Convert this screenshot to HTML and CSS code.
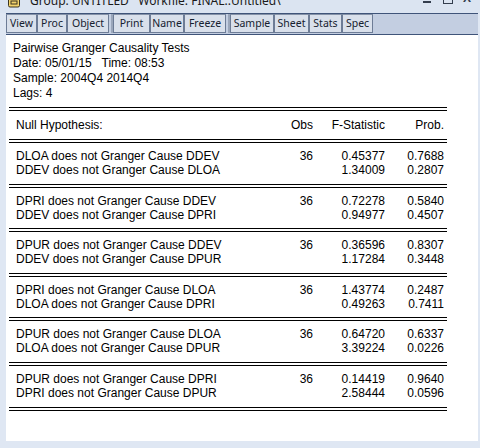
FILE: index.html
```html
<!DOCTYPE html>
<html>
<head>
<meta charset="utf-8">
<link rel="stylesheet" href="styles.css">
</head>
<body>
<div class="titlebar">
  <svg class="ticon" width="12" height="8" viewBox="0 0 12 8"><rect x="0.5" y="-4" width="11" height="11" rx="1.5" fill="#f3d36b" stroke="#3a3320"/><rect x="3" y="1" width="6" height="3" fill="#f3d36b" stroke="#3a3320" stroke-width="1"/></svg>
  <span class="ttext">Group: UNTITLED&nbsp;&nbsp;&nbsp;Workfile: FINAL::Untitled\</span>
  <div class="wctl">
    <span class="wmin"></span>
    <span class="wmax"></span>
    <span class="wx">X</span>
  </div>
</div>
<div class="frame">
  <div class="toolbar">
    <span class="btn w31">View</span><span class="btn w30">Proc</span><span class="btn w42">Object</span><span class="sep"></span><span class="btn w37">Print</span><span class="btn w34">Name</span><span class="btn w42">Freeze</span><span class="sep"></span><span class="btn w44">Sample</span><span class="btn w35">Sheet</span><span class="btn w33">Stats</span><span class="btn w31">Spec</span>
  </div>
  <div class="content">
    <div class="info">
      <div>Pairwise Granger Causality Tests</div>
      <div>Date: 05/01/15&nbsp;&nbsp; Time: 08:53</div>
      <div>Sample: 2004Q4 2014Q4</div>
      <div>Lags: 4</div>
    </div>
    <div class="tbl">
      <div class="dbl"></div>
      <div class="row head"><span class="c1">Null Hypothesis:</span><span class="c2">Obs</span><span class="c3">F-Statistic</span><span class="c4">Prob.</span></div>
      <div class="dbl"></div>
      <div class="blk">
        <div class="row"><span class="c1">DLOA does not Granger Cause DDEV</span><span class="c2">36</span><span class="c3">0.45377</span><span class="c4">0.7688</span></div>
        <div class="row"><span class="c1">DDEV does not Granger Cause DLOA</span><span class="c2"></span><span class="c3">1.34009</span><span class="c4">0.2807</span></div>
      </div>
      <div class="dbl"></div>
      <div class="blk">
        <div class="row"><span class="c1">DPRI does not Granger Cause DDEV</span><span class="c2">36</span><span class="c3">0.72278</span><span class="c4">0.5840</span></div>
        <div class="row"><span class="c1">DDEV does not Granger Cause DPRI</span><span class="c2"></span><span class="c3">0.94977</span><span class="c4">0.4507</span></div>
      </div>
      <div class="dbl"></div>
      <div class="blk">
        <div class="row"><span class="c1">DPUR does not Granger Cause DDEV</span><span class="c2">36</span><span class="c3">0.36596</span><span class="c4">0.8307</span></div>
        <div class="row"><span class="c1">DDEV does not Granger Cause DPUR</span><span class="c2"></span><span class="c3">1.17284</span><span class="c4">0.3448</span></div>
      </div>
      <div class="dbl"></div>
      <div class="blk">
        <div class="row"><span class="c1">DPRI does not Granger Cause DLOA</span><span class="c2">36</span><span class="c3">1.43774</span><span class="c4">0.2487</span></div>
        <div class="row"><span class="c1">DLOA does not Granger Cause DPRI</span><span class="c2"></span><span class="c3">0.49263</span><span class="c4">0.7411</span></div>
      </div>
      <div class="dbl"></div>
      <div class="blk">
        <div class="row"><span class="c1">DPUR does not Granger Cause DLOA</span><span class="c2">36</span><span class="c3">0.64720</span><span class="c4">0.6337</span></div>
        <div class="row"><span class="c1">DLOA does not Granger Cause DPUR</span><span class="c2"></span><span class="c3">3.39224</span><span class="c4">0.0226</span></div>
      </div>
      <div class="dbl"></div>
      <div class="blk">
        <div class="row"><span class="c1">DPUR does not Granger Cause DPRI</span><span class="c2">36</span><span class="c3">0.14419</span><span class="c4">0.9640</span></div>
        <div class="row"><span class="c1">DPRI does not Granger Cause DPUR</span><span class="c2"></span><span class="c3">2.58444</span><span class="c4">0.0596</span></div>
      </div>
      <div class="dbl"></div>
    </div>
  </div>
</div>
</body>
</html>
```

FILE: styles.css
```css
html, body {
  margin: 0;
  padding: 0;
}
body {
  width: 480px;
  height: 448px;
  overflow: hidden;
  background: #dfe7f3;
  font-family: "Liberation Sans", Arial, sans-serif;
}
.titlebar {
  height: 13px;
  overflow: hidden;
  display: flex;
  align-items: flex-start;
  background: #dbe4f1;
  position: relative;
}
.ticon {
  margin-left: 8px;
  margin-top: 0;
  flex: none;
}
.ttext {
  margin-left: 10px;
  margin-top: -5px;
  font-family: "Noto Sans", sans-serif;
  font-size: 12px;
  line-height: 12px;
  color: #1a1a1a;
  white-space: pre;
}
.wctl {
  position: absolute;
  top: 0;
  left: 423px;
  height: 8px;
  width: 55px;
}
.wmin {
  position: absolute;
  left: 0;
  top: 1px;
  width: 8px;
  height: 2px;
  background: #333d4d;
}
.wmax {
  position: absolute;
  left: 20px;
  top: -8px;
  width: 8px;
  height: 9px;
  border: 1px solid #333d4d;
  border-top-width: 2px;
}
.wx {
  position: absolute;
  left: 40px;
  top: -8px;
  font-family: "Liberation Sans", sans-serif;
  font-weight: bold;
  font-size: 12px;
  line-height: 12px;
  color: #333d4d;
}
.frame {
  margin: 0 2px 7px 6px;
  height: 428px;
  display: flex;
  flex-direction: column;
  background: #fff;
}
.toolbar {
  height: 20px;
  border-top: 1px solid #3f5479;
  border-bottom: 1px solid #3f5479;
  background: #c3cee1;
  display: flex;
  align-items: flex-start;
  flex: none;
}
.btn {
  box-sizing: border-box;
  height: 19px;
  border: 1px solid #6d7c96;
  border-top-color: #8592a8;
  background: #d9e0eb;
  font-family: "Noto Sans", sans-serif;
  font-size: 10.5px;
  line-height: 17px;
  color: #15202f;
  text-align: center;
  flex: none;
}
.w30 { width: 30px; }
.w31 { width: 31px; }
.w33 { width: 33px; }
.w34 { width: 34px; }
.w35 { width: 35px; }
.w37 { width: 37px; }
.w42 { width: 42px; }
.w44 { width: 44px; }
.sep {
  box-sizing: border-box;
  width: 4px;
  height: 19px;
  border-right: 2px solid #9aa6ba;
  flex: none;
}
.content {
  flex: 1;
  background: #fff;
  color: #000;
  font-size: 12px;
}
.info {
  padding: 6px 0 0 7px;
  line-height: 15px;
}
.tbl {
  margin: 6px 0 0 3px;
  width: 438px;
}
.dbl {
  height: 2px;
  border-top: 1px solid #000;
  border-bottom: 1px solid #000;
}
.row {
  display: grid;
  grid-template-columns: 250px 54px 72px 59px 3px;
  line-height: 14px;
  white-space: nowrap;
}
.row.head {
  padding: 7px 0;
}
.blk {
  padding: 6px 0 6.6px;
}
.c1 { padding-left: 7px; }
.c2, .c3, .c4 { text-align: right; }
```
